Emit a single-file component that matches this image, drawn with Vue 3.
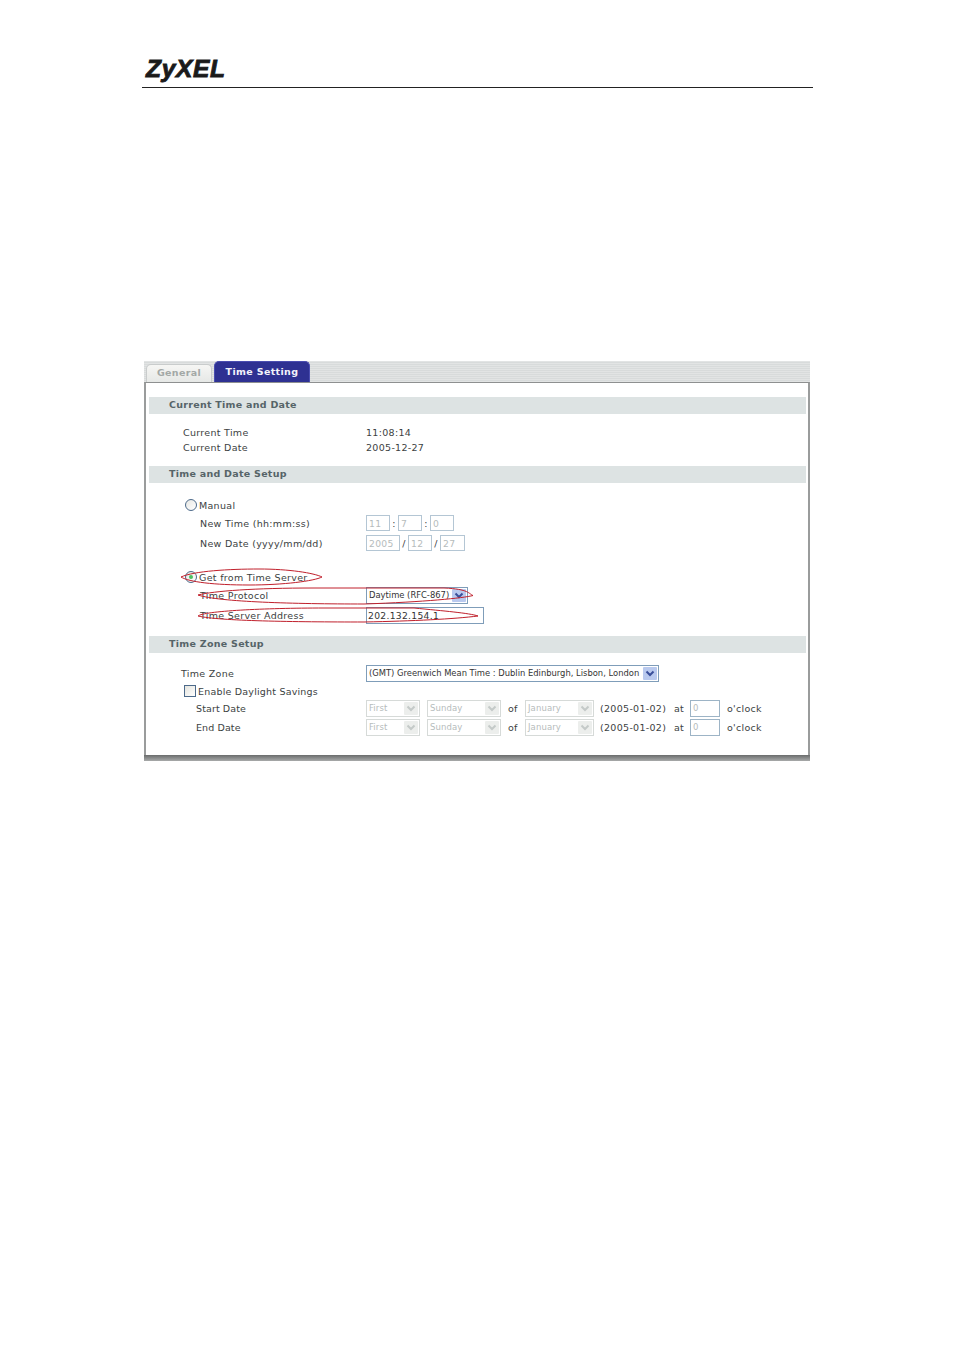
<script setup>
const dstRows = [
  { label: 'Start Date', cls: 'r-start' },
  { label: 'End Date', cls: 'r-end' },
]
</script>

<template>
  <div class="page">
    <header class="head">
      <div class="logo">ZyXEL</div>
    </header>

    <div class="panel">
      <div class="tabs">
        <div class="tab off">General</div>
        <div class="tab on">Time Setting</div>
      </div>
      <div class="body">
        <div class="bar b1">Current Time and Date</div>
        <div class="row h15 mt11"><span class="lab l1">Current Time</span><span>11:08:14</span></div>
        <div class="row h15"><span class="lab l1">Current Date</span><span>2005-12-27</span></div>

        <div class="bar b2">Time and Date Setup</div>
        <div class="row h16 mt14 rad-row">
          <span class="radio"></span><span>Manual</span>
        </div>
        <div class="row h18 mt1">
          <span class="lab l2">New Time (hh:mm:ss)</span>
          <span class="inp off w24">11</span><span class="sep">:</span>
          <span class="inp off w24">7</span><span class="sep">:</span>
          <span class="inp off w24">0</span>
        </div>
        <div class="row h18 mt2">
          <span class="lab l2">New Date (yyyy/mm/dd)</span>
          <span class="inp off w34">2005</span><span class="sep">/</span>
          <span class="inp off w24">12</span><span class="sep">/</span>
          <span class="inp off w25">27</span>
        </div>
        <div class="row h16 mt17 rad-row">
          <span class="radio sel"><i></i></span><span>Get from Time Server</span>
        </div>
        <div class="row h18 mt1">
          <span class="lab l2">Time Protocol</span>
          <span class="sel-box w102"><span class="sel-txt">Daytime (RFC-867)</span>
            <span class="arrow"><svg width="14" height="13" viewBox="0 0 14 13"><path d="M3.5 4.5 7 8l3.5-3.5" fill="none" stroke="#3a4f9a" stroke-width="2"/></svg></span>
          </span>
        </div>
        <div class="row h18 mt2">
          <span class="lab l2">Time Server Address</span>
          <span class="inp w118 dark">202.132.154.1</span>
        </div>

        <div class="bar b3">Time Zone Setup</div>
        <div class="row h18 mt11">
          <span class="lab l3">Time Zone</span>
          <span class="sel-box w293"><span class="sel-txt">(GMT) Greenwich Mean Time : Dublin Edinburgh, Lisbon, London</span>
            <span class="arrow"><svg width="14" height="13" viewBox="0 0 14 13"><path d="M3.5 4.5 7 8l3.5-3.5" fill="none" stroke="#3a4f9a" stroke-width="2"/></svg></span>
          </span>
        </div>
        <div class="row h16 mt1 chk-row">
          <span class="chk"></span><span>Enable Daylight Savings</span>
        </div>
        <div v-for="r in dstRows" :key="r.label" class="row dst" :class="r.cls">
          <span class="lab l4">{{ r.label }}</span>
          <span class="sel-box off w54"><span class="sel-txt">First</span><span class="arrow off"><svg width="14" height="13" viewBox="0 0 14 13"><path d="M3.5 4.5 7 8l3.5-3.5" fill="none" stroke="#c4cac8" stroke-width="2"/></svg></span></span>
          <span class="sel-box off w74 ml7"><span class="sel-txt">Sunday</span><span class="arrow off"><svg width="14" height="13" viewBox="0 0 14 13"><path d="M3.5 4.5 7 8l3.5-3.5" fill="none" stroke="#c4cac8" stroke-width="2"/></svg></span></span>
          <span class="t-of">of</span>
          <span class="sel-box off w69"><span class="sel-txt">January</span><span class="arrow off"><svg width="14" height="13" viewBox="0 0 14 13"><path d="M3.5 4.5 7 8l3.5-3.5" fill="none" stroke="#c4cac8" stroke-width="2"/></svg></span></span>
          <span class="t-date">(2005-01-02)</span>
          <span class="t-at">at</span>
          <span class="inp off w30 tight">0</span>
          <span class="t-clock">o'clock</span>
        </div>
      </div>
      <div class="foot"></div>

      <svg class="marks" width="666" height="400" viewBox="0 0 666 400">
        <path d="M37 216C50 210 85 208 115 208C145 208 170 212 178 216C170 220 140 224 105 224C70 224 45 221 37 216Z" />
        <path d="M54 234C70 230 110 227 170 227L300 227C325 228 325 233 329 234.500C320 237 280 241 220 243C150 243 75 241 54 234Z" />
        <path d="M54 255C60 250 120 247 180 247L270 247C300 250 325 252 334 255C310 258 270 260 220 261C150 261 75 260 54 255Z" />
      </svg>
    </div>
  </div>
</template>

<style>
html, body { background: #fff; }
</style>

<style scoped>
.page {
  width: 954px;
  height: 1350px;
  background: #fff;
  overflow: hidden;
  font-family: "DejaVu Sans", sans-serif;
  font-size: 9.5px;
  letter-spacing: 0.3px;
  color: #3c4242;
}
.head {
  margin-left: 142px;
  width: 671px;
  height: 87px;
  border-bottom: 1px solid #222;
  box-sizing: content-box;
}
.logo {
  padding: 54px 0 0 4px;
  font-family: "Liberation Sans", sans-serif;
  font-weight: 700;
  font-style: italic;
  font-size: 24.5px;
  line-height: 30px;
  letter-spacing: 0.7px;
  color: #1a1a1a;
  -webkit-text-stroke: 0.9px #1a1a1a;
}
.panel {
  position: relative;
  margin: 273px 0 0 144px;
  width: 666px;
  height: 400px;
  background: repeating-linear-gradient(#e2e4e4 0 1px, #d8dbdb 1px 2px);
}
.tabs {
  height: 21px;
  display: flex;
  align-items: flex-end;
  padding-left: 2px;
  gap: 2px;
}
.tab {
  border-radius: 5px 5px 0 0;
  text-align: center;
  font-weight: 700;
  font-size: 9.5px;
  letter-spacing: 0.35px;
  box-sizing: border-box;
}
.tab.off {
  width: 66px;
  height: 18px;
  line-height: 15px;
  background: linear-gradient(#f6f6f4, #e6e8e6);
  color: #a3a8a6;
  border: 1px solid #c9cccc;
  border-bottom: 0;
}
.tab.on {
  width: 96px;
  height: 21px;
  line-height: 20px;
  background: #2e3192;
  color: #f2f2fa;
  border: 1px solid #4a4db0;
  border-bottom: 0;
}
.body {
  height: 373px;
  box-sizing: border-box;
  background: #fff;
  border-left: 2px solid #9a9c9c;
  border-right: 2px solid #9a9c9c;
  border-top: 1px solid #8e9090;
  padding: 14px 2px 0 3px;
}
.foot {
  height: 6px;
  background: linear-gradient(#6a6c6c, #a8aaaa);
}
.bar {
  height: 17px;
  line-height: 16px;
  padding-left: 20px;
  background: #dde3e3;
  color: #566468;
  font-weight: 700;
  font-size: 9.5px;
  letter-spacing: 0.27px;
}
.b2 { margin-top: 11px; }
.b3 { margin-top: 12px; }
.row {
  display: flex;
  align-items: center;
  white-space: nowrap;
}
.h15 { height: 15px; }
.h16 { height: 16px; }
.h18 { height: 18px; }
.mt1 { margin-top: 1px; }
.mt2 { margin-top: 2px; }
.mt11 { margin-top: 11px; }
.mt14 { margin-top: 14px; }
.mt17 { margin-top: 17px; }
.lab { flex: none; box-sizing: border-box; width: 217px; }
.l1 { padding-left: 34px; }
.l2 { padding-left: 51px; }
.l3 { padding-left: 32px; }
.l4 { padding-left: 47px; letter-spacing: 0.1px; }
.rad-row { padding-left: 36px; gap: 2px; }
.chk-row { padding-left: 35px; gap: 2px; letter-spacing: 0.2px; }
.radio {
  width: 12px;
  height: 12px;
  box-sizing: border-box;
  border: 1px solid #4d6a8a;
  border-radius: 50%;
  background: linear-gradient(135deg, #e8e8e4, #fff);
  display: flex;
  align-items: center;
  justify-content: center;
}
.radio i {
  width: 4px;
  height: 4px;
  border-radius: 50%;
  background: #4cc060;
}
.chk {
  width: 12px;
  height: 12px;
  box-sizing: border-box;
  border: 1px solid #4d6a8a;
  background: linear-gradient(135deg, #e4e4de, #fff);
}
.inp {
  display: block;
  flex: none;
  height: 16px;
  line-height: 15px;
  box-sizing: border-box;
  border: 1px solid #7f9db9;
  padding-left: 2px;
  font-size: 9.2px;
}
.inp.off {
  color: #b6bcbc;
  border-color: #b4c6d4;
}
.inp.dark { height: 17px; color: #333; padding-left: 1px; }
.inp.tight { height: 17px; font-size: 8.5px; border-color: #9db4c6; }
.sep { flex: none; width: 8px; text-align: center; }
.w24 { width: 24px; }
.w25 { width: 25px; }
.w30 { width: 30px; }
.w34 { width: 34px; }
.w54 { width: 54px; }
.w69 { width: 69px; }
.w74 { width: 74px; }
.w102 { width: 102px; }
.w118 { width: 118px; }
.w293 { width: 293px; }
.ml7 { margin-left: 7px; }
.sel-box {
  flex: none;
  height: 17px;
  box-sizing: border-box;
  border: 1px solid #7f9db9;
  display: flex;
  align-items: center;
  justify-content: space-between;
  padding: 0 1px 0 2px;
  font-size: 8.4px;
  letter-spacing: 0;
  color: #333;
}
.sel-box.off {
  color: #b6bcbc;
  border-color: #d6dad8;
  font-size: 8.5px;
  letter-spacing: 0.1px;
}
.arrow {
  flex: none;
  width: 14px;
  height: 13px;
  display: block;
  background: #b9c9ee;
  border-radius: 1px;
}
.arrow svg { display: block; }
.arrow.off { background: #eceeec; }
.dst { height: 18px; }
.r-end { margin-top: 1px; }
.t-of { flex: none; width: 17px; margin-left: 7px; }
.t-date { flex: none; width: 74px; margin-left: 6px; }
.t-at { flex: none; width: 16px; }
.t-clock { flex: none; margin-left: 7px; }
.marks {
  position: absolute;
  left: 0;
  top: 0;
  pointer-events: none;
}
.marks path {
  fill: none;
  stroke: #c0202c;
  stroke-width: 1;
}
</style>
